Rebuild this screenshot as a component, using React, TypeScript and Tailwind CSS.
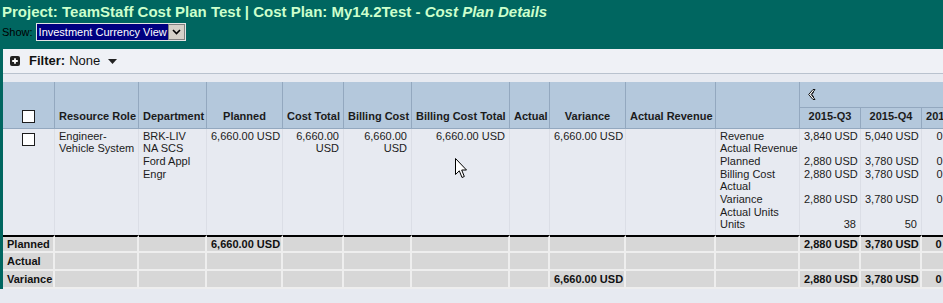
import React from 'react'

const cols = [52, 84, 68, 76, 61, 68, 98, 40, 76, 90, 84, 61, 61, 52]

const detailLabels = [
  'Revenue',
  'Actual Revenue',
  'Planned',
  'Billing Cost',
  'Actual',
  'Variance',
  'Actual Units',
  'Units',
]

const quarters = [
  { name: '2015-Q3', vals: ['3,840 USD', '', '2,880 USD', '2,880 USD', '', '2,880 USD', '', '38'], planned: '2,880 USD', variance: '2,880 USD' },
  { name: '2015-Q4', vals: ['5,040 USD', '', '3,780 USD', '3,780 USD', '', '3,780 USD', '', '50'], planned: '3,780 USD', variance: '3,780 USD' },
  { name: '2016-Q1', vals: ['0 USD', '', '0 USD', '0 USD', '', '0 USD', '', '0'], planned: '0 USD', variance: '0 USD' },
]

function Checkbox() {
  return <div className="w-[13px] h-[13px] bg-white border border-[#1c1c1c] mx-auto" />
}

function Lines({ items, right }: { items: string[]; right?: boolean }) {
  return (
    <div className={right ? 'text-right' : ''}>
      {items.map((t, i) => (
        <div key={i} className="h-[12.7px] leading-[12.7px] whitespace-nowrap">
          {t || '\u00a0'}
        </div>
      ))}
    </div>
  )
}

const th = 'border-r border-b border-[#93a8bf] px-[4px] pb-[3px] align-bottom font-bold text-[11px] text-[#1b1b1b] whitespace-nowrap'
const td = 'border-r border-[#dbdee6] px-[4px] pt-[1px] align-top text-[11px] leading-[12.7px] text-[#1b1b1b] whitespace-nowrap'
const ft = 'border-r-2 border-b-2 border-[#eeeeee] px-[4px] h-[18px] leading-[14px] text-[11px] font-bold text-[#111] whitespace-nowrap'

export default function App() {
  const totals = [
    { label: 'Planned', planned: '6,660.00 USD', variance: '', q: 'planned' as const },
    { label: 'Actual', planned: '', variance: '', q: null },
    { label: 'Variance', planned: '', variance: '6,660.00 USD', q: 'variance' as const },
  ]

  return (
    <div className="relative w-[943px] h-[303px] overflow-hidden bg-[#e7eaf1] font-['Liberation_Sans',Arial,sans-serif]">
      {/* Page header */}
      <div className="bg-[#006660] h-[49px] px-[2px]">
        <h1 className="text-[15px] leading-[22px] pt-[1px] font-bold text-[#ccffcc] whitespace-nowrap">
          Project: TeamStaff Cost Plan Test | Cost Plan: My14.2Test - <i>Cost Plan Details</i>
        </h1>
        <div className="flex items-center gap-[3px] text-[11px] text-black">
          <span>Show:</span>
          <div className="flex h-[18px] border border-[#e4e4e4] bg-white">
            <div className="bg-[#000080] text-white px-[2px] leading-[16px] w-[131px] whitespace-nowrap">
              Investment Currency View
            </div>
            <div className="w-[17px] bg-[#d4d0c8] border border-[#808080] flex items-center justify-center">
              <svg width="9" height="6" viewBox="0 0 9 6">
                <path d="M1 1 L4.5 4.5 L8 1" stroke="#000" strokeWidth="1.6" fill="none" />
              </svg>
            </div>
          </div>
        </div>
      </div>

      <div className="border-l-[3px] border-[#006660]">
        {/* Filter bar */}
        <div className="h-[25px] bg-[#eff1f6] border-b border-[#b9c2ce] flex items-center pl-[7px] text-[13px] text-[#111]">
          <svg width="10" height="10" viewBox="0 0 10 10" className="mr-[9px]">
            <rect x="0" y="0" width="10" height="10" rx="2" fill="#222" />
            <path d="M5 2.2 V7.8 M2.2 5 H7.8" stroke="#fff" strokeWidth="1.8" />
          </svg>
          <span className="font-bold">Filter:</span>
          <span className="ml-[4px]">None</span>
          <svg width="9" height="5" viewBox="0 0 9 5" className="ml-[8px]">
            <path d="M0 0 H9 L4.5 5 Z" fill="#222" />
          </svg>
        </div>
        <div className="h-[8px]" />

        {/* Grid */}
        <table className="table-fixed border-separate border-spacing-0 w-[971px]">
          <colgroup>
            {cols.map((w, i) => (
              <col key={i} style={{ width: w }} />
            ))}
          </colgroup>
          <thead className="bg-[#b4c8dc]">
            <tr className="h-[26px]">
              <th rowSpan={2} className={`${th} pb-[5px]`}>
                <Checkbox />
              </th>
              <th rowSpan={2} className={`${th} text-left`}>Resource Role</th>
              <th rowSpan={2} className={`${th} text-left`}>Department</th>
              <th rowSpan={2} className={`${th} text-center`}>Planned</th>
              <th rowSpan={2} className={`${th} text-center`}>Cost Total</th>
              <th rowSpan={2} className={`${th} text-center`}>Billing Cost</th>
              <th rowSpan={2} className={`${th} text-center`}>Billing Cost Total</th>
              <th rowSpan={2} className={`${th} text-center`}>Actual</th>
              <th rowSpan={2} className={`${th} text-center`}>Variance</th>
              <th rowSpan={2} className={`${th} text-left`}>Actual Revenue</th>
              <th rowSpan={2} className={th}></th>
              <th colSpan={3} className="border-b border-[#93a8bf] px-[8px] align-middle text-left">
                <svg width="9" height="11" viewBox="0 0 9 11" className="block">
                  <path d="M5 0.5 L0.7 5.5 L5 10.5 L7 10.5 L3.2 5.5 L7 0.5 Z" fill="#fff" stroke="#111" strokeWidth="1" strokeLinejoin="round" />
                  <path d="M5.6 3 L3.9 5.5 L5.6 8" stroke="#111" strokeWidth="0.9" fill="none" />
                </svg>
              </th>
            </tr>
            <tr className="h-[19px]">
              {quarters.map((q) => (
                <th key={q.name} className={`${th} text-center`}>{q.name}</th>
              ))}
            </tr>
          </thead>
          <tbody>
            <tr className="bg-[#e7eaf1]">
              <td className={`${td} pt-[4px]`}>
                <Checkbox />
              </td>
              <td className={td}>
                Engineer-
                <br />
                Vehicle System
              </td>
              <td className={td}>
                BRK-LIV
                <br />
                NA SCS
                <br />
                Ford Appl
                <br />
                Engr
              </td>
              <td className={`${td} text-right`}>6,660.00 USD</td>
              <td className={`${td} text-right`}>
                6,660.00
                <br />
                USD
              </td>
              <td className={`${td} text-right`}>
                6,660.00
                <br />
                USD
              </td>
              <td className={`${td} text-right`}>6,660.00 USD</td>
              <td className={td}></td>
              <td className={`${td} text-right`}>6,660.00 USD</td>
              <td className={td}></td>
              <td className={`${td} pb-[4px]`}>
                <Lines items={detailLabels} />
              </td>
              {quarters.map((q) => (
                <td key={q.name} className={td}>
                  <Lines items={q.vals} right />
                </td>
              ))}
            </tr>
            {totals.map((r, ri) => (
              <tr key={r.label} className="bg-[#d7d7d7]">
                <td className={`${ft} ${ri === 0 ? 'border-t-2 border-t-black' : ''}`}>{r.label}</td>
                {Array.from({ length: 13 }).map((_, ci) => {
                  let text = ''
                  if (ci === 2) text = r.planned
                  if (ci === 7) text = r.variance
                  if (ci >= 10 && r.q) text = quarters[ci - 10][r.q]
                  return (
                    <td
                      key={ci}
                      className={`${ft} text-right ${ri === 0 ? 'border-t-2 border-t-black' : ''}`}
                    >
                      {text}
                    </td>
                  )
                })}
              </tr>
            ))}
          </tbody>
        </table>
      </div>

      {/* mouse pointer */}
      <svg width="13" height="21" viewBox="0 0 13 21" className="absolute left-[455px] top-[158px]">
        <path d="M0.5 0.5 L0.5 16.5 L4.3 12.8 L7 19.5 L9.3 18.5 L6.7 12 L11.5 12 Z" fill="#fff" stroke="#000" strokeWidth="1" strokeLinejoin="round" />
      </svg>
    </div>
  )
}
